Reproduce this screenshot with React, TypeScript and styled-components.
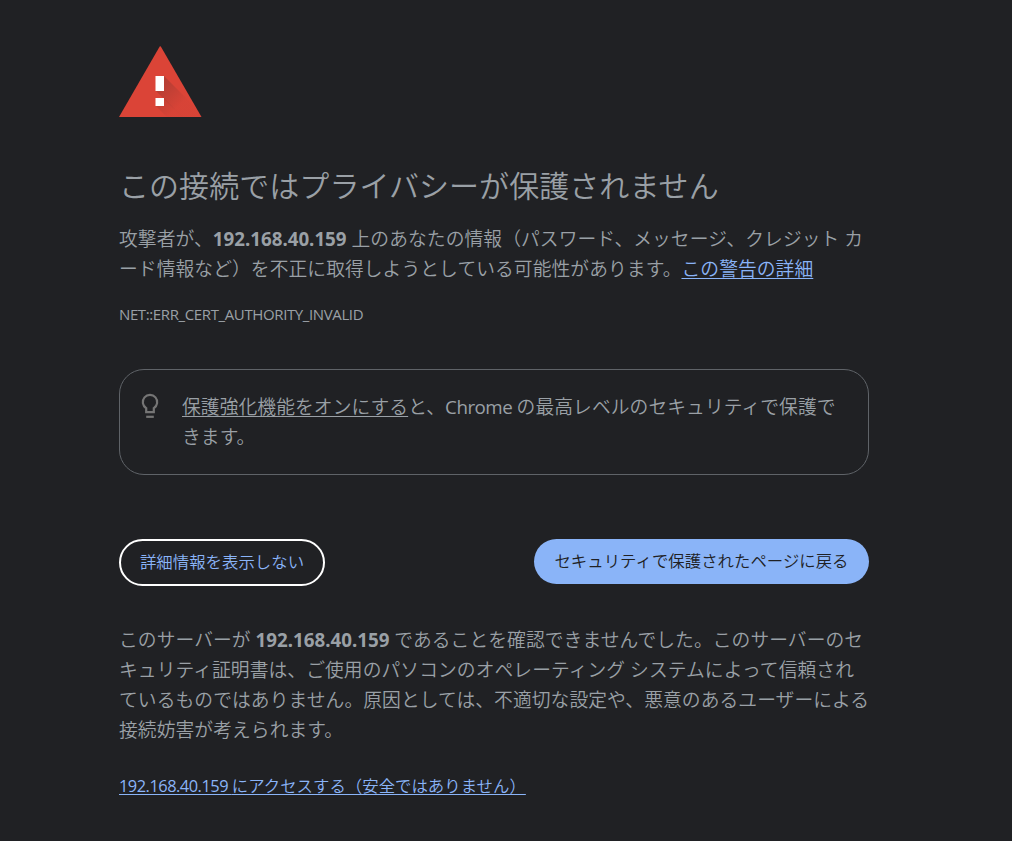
import React from 'react';
import styled, { createGlobalStyle, css } from 'styled-components';

const GlobalStyle = createGlobalStyle`
  body {
    margin: 0;
    background: #202124;
    color: #9aa0a6;
    font-family: "Open Sans", "Noto Sans CJK JP", sans-serif;
    font-size: 18.75px;
    font-weight: 350;
    letter-spacing: 0.08px;
  }
`;

const Page = styled.main`
  width: 750px;
  min-height: 841px;
  box-sizing: border-box;
  margin-left: 119px;
  padding-top: 45px;
  line-height: 30px;
  white-space: nowrap;
`;

const WarningIcon = styled.svg`
  display: block;
  width: 83px;
  height: 73px;
`;

const Title = styled.h1`
  margin: 49px 0 20px;
  font-size: 30px;
  font-weight: 350;
  line-height: 37px;
  letter-spacing: 0.06px;
`;

const Paragraph = styled.p`
  margin: 0;
`;

const Host = styled.strong`
  font-weight: 700;
  font-family: "Noto Sans", sans-serif;
  letter-spacing: 0;
`;

const Latin = styled.span`
  font-weight: 400;
  letter-spacing: -0.5px;
`;

const linkStyle = css`
  text-decoration: underline;
  text-decoration-thickness: 1px;
  text-decoration-skip-ink: none;
  text-underline-offset: 2px;
`;

const Link = styled.a`
  ${linkStyle}
  color: #8ab4f8;
`;

const ErrorCode = styled.div`
  margin-top: 19px;
  font-size: 15px;
  font-weight: 400;
  line-height: 22px;
  letter-spacing: -0.38px;
`;

const Suggestion = styled.section`
  display: flex;
  box-sizing: border-box;
  height: 106px;
  margin-top: 44px;
  padding: 22px 20px;
  border: 1px solid #5f6368;
  border-radius: 25px;
`;

const BulbIcon = styled.svg`
  width: 20px;
  height: 27px;
  margin-right: 22px;
`;

const SettingLink = styled.a`
  ${linkStyle}
`;

const Buttons = styled.div`
  display: flex;
  justify-content: space-between;
  align-items: flex-start;
  margin-top: 64px;
`;

const Button = styled.button<{ $primary?: boolean }>`
  box-sizing: border-box;
  width: ${({ $primary }) => ($primary ? '335px' : '206px')};
  height: ${({ $primary }) => ($primary ? '45px' : '47px')};
  padding: 0 0 2px;
  border: ${({ $primary }) => ($primary ? 'none' : '2px solid #fff')};
  border-radius: 24px;
  background: ${({ $primary }) => ($primary ? '#8ab4f8' : 'transparent')};
  color: ${({ $primary }) => ($primary ? '#202124' : '#8ab4f8')};
  font: inherit;
  font-size: 16.4px;
  letter-spacing: 0.02px;
  white-space: nowrap;
`;

const Details = styled.p`
  margin: 39px 0 0;
`;

const Proceed = styled.p`
  margin: 26px 0 0;
  font-size: 16.4px;
  letter-spacing: 0.02px;
`;

const App = (): JSX.Element => {
  return (
    <>
      <GlobalStyle />
      <Page>
        <WarningIcon viewBox="0 0 83 73">
          <defs>
            <linearGradient id="shade" gradientUnits="userSpaceOnUse" x1="41" y1="42" x2="60" y2="61">
              <stop offset="0" stopColor="#262626" stopOpacity="0.2" />
              <stop offset="1" stopColor="#262626" stopOpacity="0.02" />
            </linearGradient>
            <clipPath id="triangle">
              <path d="M0 72 41.25 1 82.5 72Z" />
            </clipPath>
          </defs>
          <path d="M0 72 40.7 1.6Q41.25 .8 41.8 1.6L82.5 72Z" fill="#db4437" />
          <g clipPath="url(#triangle)" fill="url(#shade)">
            <path d="M45 31 86 72H63L37 46h8Z" />
            <path d="M45 53 64 72H48L37 61h8Z" />
          </g>
          <path d="M36.500 31h8.500v15h-8.500zM36.500 53h8.500v8h-8.500z" fill="#fff" />
        </WarningIcon>

        <Title>この接続ではプライバシーが保護されません</Title>
        <Paragraph>
          攻撃者が、<Host>192.168.40.159</Host> 上のあなたの情報（パスワード、メッセージ、クレジット カ
          <br />
          ード情報など）を不正に取得しようとしている可能性があります。<Link>この警告の詳細</Link>
        </Paragraph>
        <ErrorCode>NET::ERR_CERT_AUTHORITY_INVALID</ErrorCode>

        <Suggestion>
          <BulbIcon viewBox="0 0 20 27" fill="none" stroke="#757575" strokeWidth="2.2">
            <path d="M6.200 20.100v-3.900A7.200 7.200 0 1 1 13.800 16.200v3.900Z" />
            <path d="M6.200 24.800h7.600" />
          </BulbIcon>
          <Paragraph>
            <SettingLink>保護強化機能をオンにする</SettingLink>と、<Latin>Chrome </Latin>の最高レベルのセキュリティで保護で
            <br />
            きます。
          </Paragraph>
        </Suggestion>

        <Buttons>
          <Button>詳細情報を表示しない</Button>
          <Button $primary>セキュリティで保護されたページに戻る</Button>
        </Buttons>

        <Details>
          このサーバーが <Host>192.168.40.159</Host> であることを確認できませんでした。このサーバーのセ
          <br />
          キュリティ証明書は、ご使用のパソコンのオペレーティング システムによって信頼され
          <br />
          ているものではありません。原因としては、不適切な設定や、悪意のあるユーザーによる
          <br />
          接続妨害が考えられます。
        </Details>
        <Proceed>
          <Link>
            <Latin>192.168.40.159 </Latin>にアクセスする（安全ではありません）
          </Link>
        </Proceed>
      </Page>
    </>
  );
};

export default App;
